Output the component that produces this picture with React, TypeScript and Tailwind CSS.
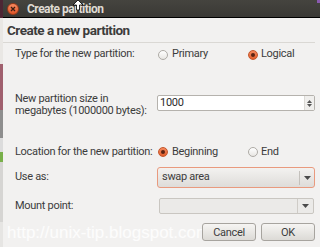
import React from 'react';

function Radio({ checked }: { checked?: boolean }) {
  return checked ? (
    <span className="w-[10px] h-[10px] rounded-full border border-[#c4562b] bg-gradient-to-b from-[#f5895d] to-[#e25f2c] flex items-center justify-center shrink-0">
      <span className="w-[4px] h-[4px] rounded-full bg-[#5c2412]" />
    </span>
  ) : (
    <span className="w-[10px] h-[10px] rounded-full border border-[#aeaba6] bg-gradient-to-b from-[#ffffff] to-[#e8e6e3] shrink-0" />
  );
}

function Arrow() {
  return (
    <svg width="7" height="4" viewBox="0 0 7 4">
      <path d="M0 0 H7 L3.5 4 Z" fill="#4a4a4a" />
    </svg>
  );
}

export default function App() {
  return (
    <div className="w-[320px] h-[247px] flex overflow-hidden bg-[#f2f1f0] text-[#3c3c3c] font-['Roboto',sans-serif] relative whitespace-nowrap">
      {/* desktop behind the window */}
      <div className="w-[3px] flex flex-col shrink-0">
        <div className="h-[18px] bg-[#4d2634]" />
        <div className="h-[46px] bg-[#e9e7e4]" />
        <div className="h-[46px] bg-[#a0606e]" />
        <div className="h-[28px] bg-[#8e8e8e]" />
        <div className="h-[14px] bg-[#dcdcdc]" />
        <div className="h-[10px] bg-[#79b04a]" />
        <div className="h-[60px] bg-[#d6d5d3]" />
        <div className="flex-1 bg-[#e6e5e3]" />
      </div>

      <div className="flex-1 min-w-0 flex flex-col">
        {/* title bar */}
        <div className="h-[17px] bg-gradient-to-b from-[#45443f] to-[#3a3935] flex items-center">
          <span className="ml-[4px] w-[12px] h-[12px] rounded-full bg-gradient-to-b from-[#f68a5f] to-[#df5426] border border-[#9a3a1a] flex items-center justify-center">
            <svg width="6" height="6" viewBox="0 0 6 6">
              <path d="M1 1 L5 5 M5 1 L1 5" stroke="#3b1d12" strokeWidth="1.3" />
            </svg>
          </span>
          <span className="ml-[8px] text-[12px] leading-none font-bold tracking-[-0.5px] text-[#dfdbd2]">Create partition</span>
        </div>
        <div className="h-px bg-black" />

        {/* body */}
        <div className="flex-1 flex flex-col">
          <div className="h-[24px] flex items-center pl-[4px] text-[13.5px] font-bold tracking-[-0.5px] text-[#3c3c3c]">
            Create a new partition
          </div>
          <div className="h-px bg-[#dad8d4] mr-[5px]" />

          <div className="pl-[12px] pr-[5px] text-[11px] tracking-[-0.3px]">
            <div className="grid grid-cols-[142px_minmax(0,1fr)]">
              <div className="h-[23px] flex items-center">Type for the new partition:</div>
              <div className="h-[23px] flex items-center">
                <div className="w-[91px] flex items-center gap-[4px] pl-[1px]">
                  <Radio />
                  <span>Primary</span>
                </div>
                <div className="flex items-center gap-[3px]">
                  <Radio checked />
                  <span>Logical</span>
                </div>
              </div>

              <div className="mt-[24px] h-[26px] flex flex-col justify-center leading-[12px] pt-[4px]">
                <span>New partition size in</span>
                <span>megabytes (1000000 bytes):</span>
              </div>
              <div className="mt-[24px] h-[26px] flex items-center">
                <div className="w-full h-[16px] flex border border-[#b5b2ad] rounded-[2px] bg-white">
                  <span className="flex-1 pl-[2px] text-[11px] leading-[14px] text-[#2c2c2c]">1000</span>
                  <span className="w-[10px] flex flex-col items-center justify-center gap-[1px] border-l border-[#dcdad6] bg-[#f0efed]">
                    <svg width="5" height="3" viewBox="0 0 5 3"><path d="M0 3 H5 L2.5 0 Z" fill="#555" /></svg>
                    <svg width="5" height="3" viewBox="0 0 5 3"><path d="M0 0 H5 L2.5 3 Z" fill="#555" /></svg>
                  </span>
                </div>
              </div>

              <div className="mt-[25px] h-[22px] flex items-center">Location for the new partition:</div>
              <div className="mt-[25px] h-[22px] flex items-center">
                <div className="w-[91px] flex items-center gap-[4px] pl-[1px]">
                  <Radio checked />
                  <span>Beginning</span>
                </div>
                <div className="flex items-center gap-[3px]">
                  <Radio />
                  <span>End</span>
                </div>
              </div>

              <div className="h-[29px] flex items-center">Use as:</div>
              <div className="h-[29px] flex items-center">
                <div className="w-full h-[21px] flex items-center border border-[#e99a7e] rounded-[3px] bg-gradient-to-b from-[#f3f2f0] to-[#dedcd9]">
                  <span className="flex-1 pl-[4px]">swap area</span>
                  <span className="w-px h-[14px] bg-[#c4c1bc]" />
                  <span className="w-[14px] flex justify-center"><Arrow /></span>
                </div>
              </div>

              <div className="h-[28px] flex items-center">Mount point:</div>
              <div className="h-[28px] flex items-center pl-[2px] pr-[1px]">
                <div className="w-full h-[16px] flex items-center border border-[#c9c6c1] rounded-[2px] bg-[#ebeae8]">
                  <span className="flex-1" />
                  <span className="w-px h-[14px] bg-[#cfccc7]" />
                  <span className="w-[15px] flex justify-center"><Arrow /></span>
                </div>
              </div>
            </div>

            <div className="mt-[3px] flex items-center gap-[5px]">
              <span className="flex-1 min-w-0 -ml-[8px] text-[17px] leading-none tracking-normal text-white/80 font-['Liberation_Sans',sans-serif]">
                http://unix-tip.blogspot.com/
              </span>
              <button className="w-[54px] h-[18px] shrink-0 border border-[#a7a49f] rounded-[3px] bg-gradient-to-b from-[#f6f5f3] to-[#dcdad6] text-[11px] leading-none text-[#3c3c3c]">
                Cancel
              </button>
              <button className="w-[54px] h-[18px] shrink-0 border border-[#a7a49f] rounded-[3px] bg-gradient-to-b from-[#f6f5f3] to-[#dcdad6] text-[11px] leading-none text-[#3c3c3c]">
                OK
              </button>
            </div>
          </div>
        </div>
      </div>

      {/* mouse pointer */}
      <svg className="absolute left-[72px] top-0" width="12" height="12" viewBox="0 0 12 12">
        <path d="M6 0 L11 5 L7.5 5 L7.5 10 L4.5 10 L4.5 5 L1 5 Z" fill="#fff" stroke="#000" strokeWidth="0.8" />
      </svg>
      <span className="absolute right-0 top-0 w-[3px] h-[3px] bg-[#8a5ab0]" />
    </div>
  );
}
